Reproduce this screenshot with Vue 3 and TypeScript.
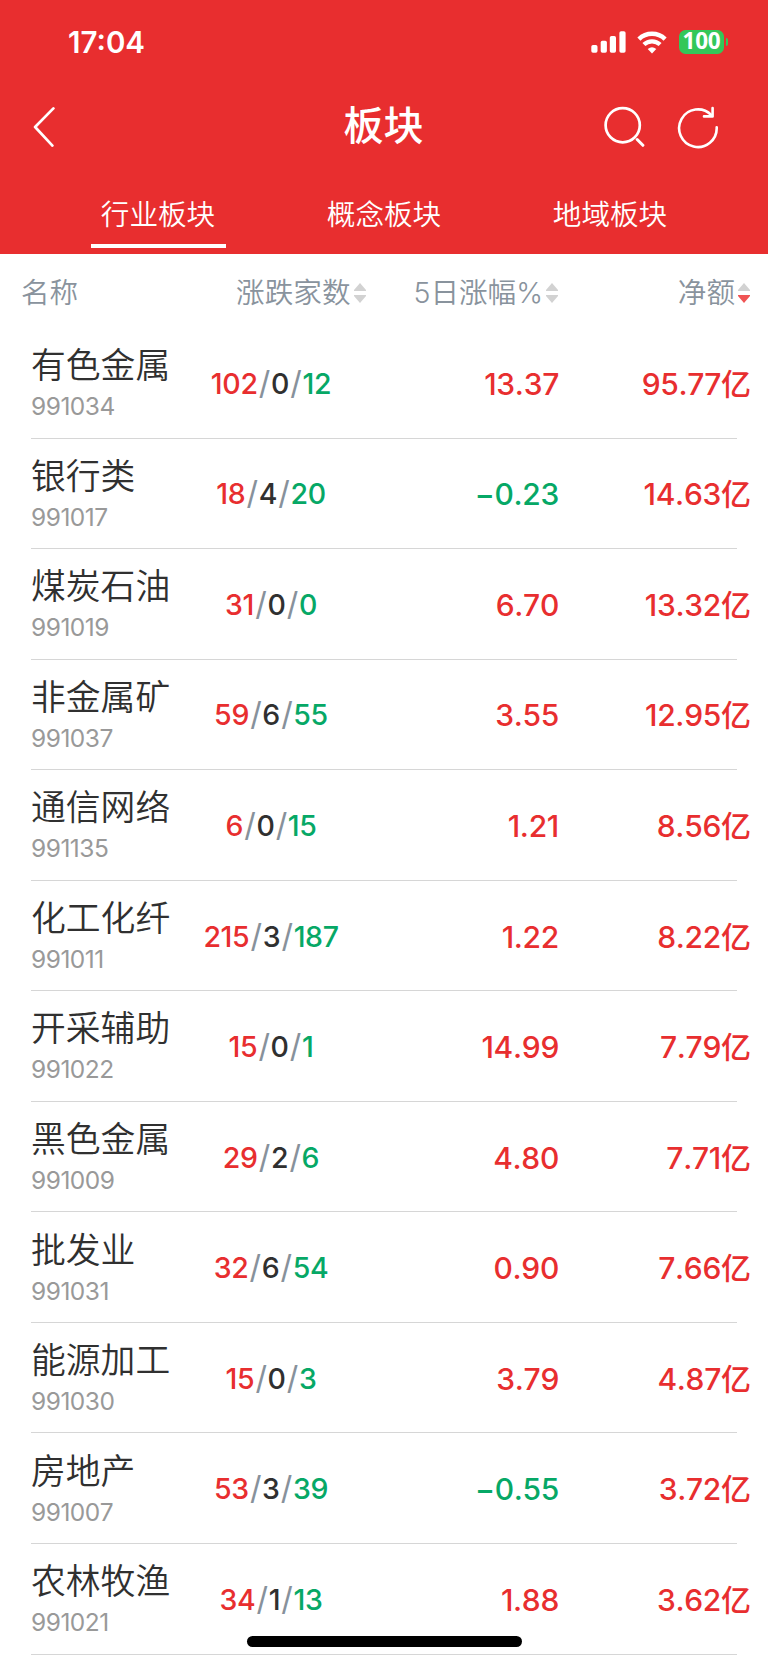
<script setup lang="ts">
interface Sector {
  name: string
  code: string
  up: number
  flat: number
  down: number
  change: string
  amount: string
}

const tabs: string[] = ['行业板块', '概念板块', '地域板块']
const activeTab = 0

const sectors: Sector[] = [
  { name: '有色金属', code: '991034', up: 102, flat: 0, down: 12, change: '13.37', amount: '95.77' },
  { name: '银行类', code: '991017', up: 18, flat: 4, down: 20, change: '−0.23', amount: '14.63' },
  { name: '煤炭石油', code: '991019', up: 31, flat: 0, down: 0, change: '6.70', amount: '13.32' },
  { name: '非金属矿', code: '991037', up: 59, flat: 6, down: 55, change: '3.55', amount: '12.95' },
  { name: '通信网络', code: '991135', up: 6, flat: 0, down: 15, change: '1.21', amount: '8.56' },
  { name: '化工化纤', code: '991011', up: 215, flat: 3, down: 187, change: '1.22', amount: '8.22' },
  { name: '开采辅助', code: '991022', up: 15, flat: 0, down: 1, change: '14.99', amount: '7.79' },
  { name: '黑色金属', code: '991009', up: 29, flat: 2, down: 6, change: '4.80', amount: '7.71' },
  { name: '批发业', code: '991031', up: 32, flat: 6, down: 54, change: '0.90', amount: '7.66' },
  { name: '能源加工', code: '991030', up: 15, flat: 0, down: 3, change: '3.79', amount: '4.87' },
  { name: '房地产', code: '991007', up: 53, flat: 3, down: 39, change: '−0.55', amount: '3.72' },
  { name: '农林牧渔', code: '991021', up: 34, flat: 1, down: 13, change: '1.88', amount: '3.62' },
]
</script>

<template>
  <div class="screen">
    <header class="top">
      <div class="status">
        <span class="time">17:04</span>
        <div class="indicators">
          <svg class="signal" width="35" height="22" viewBox="0 0 35 22" fill="#fff">
            <rect x="0.3" y="14" width="6.2" height="7.8" rx="1.7" />
            <rect x="9.7" y="9.8" width="6.2" height="12" rx="1.7" />
            <rect x="18.8" y="5" width="6.2" height="16.8" rx="1.7" />
            <rect x="28.4" y="0.2" width="6.2" height="21.6" rx="1.7" />
          </svg>
          <svg class="wifi" width="30" height="23" viewBox="0 0 30 23" fill="none" stroke="#fff">
            <path d="M1.9 8.1A19 19 0 0 1 28.1 8.1" stroke-width="4.5" />
            <path d="M6.9 13.5A11.8 11.8 0 0 1 23.1 13.5" stroke-width="4.3" />
            <path d="M15 22.4L10.7 18.1Q15 14.5 19.3 18.1Z" fill="#fff" stroke="none" />
          </svg>
          <div class="battery"><span class="level">100</span></div>
          <i class="nub"></i>
        </div>
      </div>

      <div class="nav">
        <svg class="back" width="24" height="42" viewBox="0 0 24 42" fill="none" stroke="#fff" stroke-width="2.7" stroke-linecap="round" stroke-linejoin="round">
          <path d="M22.4 2.4L4.1 21L21.4 39.6" />
        </svg>
        <h1 class="title">板块</h1>
        <div class="actions">
          <svg width="42" height="44" viewBox="0 0 42 44" fill="none" stroke="#fff" stroke-width="2.7" stroke-linecap="round">
            <circle cx="19.7" cy="20.2" r="17.1" />
            <path d="M34.2 34.5L39.9 40.3" stroke-width="3" />
          </svg>
          <svg width="42" height="44" viewBox="0 0 42 44" fill="none" stroke="#fff" stroke-width="2.6" stroke-linecap="round" stroke-linejoin="round">
            <path d="M39.7 22.4A18.8 18.8 0 1 1 34.2 9.9" />
            <path d="M35.6 3.1V11.4H27" />
          </svg>
        </div>
      </div>

      <nav class="tabs">
        <div v-for="(tab, i) in tabs" :key="tab" class="tab" :class="{ active: i === activeTab }">
          <span>{{ tab }}</span>
        </div>
      </nav>
    </header>

    <main>
      <div class="columns">
        <div class="head-name">名称</div>
        <div class="head head-count">
          <span>涨跌家数</span>
          <svg class="sort" width="12" height="20" viewBox="0 0 12 20" fill="#d2d2d2">
            <path d="M6 0L12 7V8H0V7Z" /><path d="M6 20L12 13V12H0V13Z" />
          </svg>
        </div>
        <div class="head head-change">
          <span>5日涨幅%</span>
          <svg class="sort" width="12" height="20" viewBox="0 0 12 20" fill="#d2d2d2">
            <path d="M6 0L12 7V8H0V7Z" /><path d="M6 20L12 13V12H0V13Z" />
          </svg>
        </div>
        <div class="head head-amount">
          <span>净额</span>
          <svg class="sort" width="12" height="20" viewBox="0 0 12 20" fill="#d2d2d2">
            <path d="M6 0L12 7V8H0V7Z" /><path d="M6 20L12 13V12H0V13Z" fill="#f05454" />
          </svg>
        </div>
      </div>

      <div v-for="s in sectors" :key="s.code" class="row">
        <div class="ident">
          <div class="name">{{ s.name }}</div>
          <div class="code">{{ s.code }}</div>
        </div>
        <div class="count">
          <span class="red">{{ s.up }}</span><span class="slash">/</span><span>{{ s.flat }}</span><span class="slash">/</span><span class="green">{{ s.down }}</span>
        </div>
        <div class="change" :class="s.change.startsWith('−') ? 'green' : 'red'">{{ s.change }}</div>
        <div class="amount red">{{ s.amount }}<span class="unit">亿</span></div>
      </div>
    </main>
    <div class="home-bar"></div>
  </div>
</template>

<style>
html,
body {
  margin: 0;
  background: #fff;
}
</style>

<style scoped>
.screen {
  position: relative;
  width: 768px;
  height: 1663px;
  overflow: hidden;
  background: #fff;
  color: #303030;
  font-family: Inter, "Noto Sans CJK SC", sans-serif;
}
.top {
  height: 254px;
  background: #e82e2f;
  color: #fff;
}
.status {
  display: flex;
  justify-content: space-between;
  height: 84px;
  padding: 0 40px 0 68px;
}
.time {
  font-size: 29.5px;
  font-weight: 600;
  line-height: 84px;
}
.indicators {
  display: flex;
  align-items: center;
}
.signal {
  margin-right: 11px;
}
.wifi {
  margin-right: 12px;
}
.battery {
  width: 45px;
  height: 24px;
  border-radius: 6.5px;
  background: #34c759;
  text-align: center;
}
.level {
  display: block;
  font: 700 22.5px/22px "Noto Sans", sans-serif;
  letter-spacing: -0.2px;
}
.nub {
  width: 2px;
  height: 8px;
  margin-left: 2px;
  border-radius: 0 3px 3px 0;
  background: #34c759;
}
.nav {
  display: grid;
  grid-template-columns: 1fr auto 1fr;
  align-items: center;
  height: 86px;
  padding: 0 49px 0 31px;
}
.back {
  display: block;
}
.title {
  margin: 0 0 3px 17px;
  font-size: 40px;
  font-weight: 500;
  line-height: 60px;
}
.actions {
  display: flex;
  justify-content: flex-end;
  gap: 32px;
}
.tabs {
  display: grid;
  grid-template-columns: repeat(3, 226px);
  justify-content: center;
  height: 84px;
}
.tab {
  display: flex;
  flex-direction: column;
  align-items: center;
  font-size: 28.6px;
  font-weight: 350;
  line-height: 90px;
  height: 84px;
}
.tab.active::after {
  content: "";
  width: 135px;
  height: 4px;
  margin-top: -16px;
  background: #fff;
}
.columns {
  display: grid;
  grid-template-columns: 200px 165.5px 192.5px 192px;
  align-items: center;
  box-sizing: border-box;
  height: 74px;
  padding-top: 3px;
  color: #89939d;
  font-size: 28.6px;
  font-weight: 350;
  line-height: 40px;
}
.head-name {
  padding-left: 21px;
}
.head {
  display: flex;
  align-items: center;
  justify-content: flex-end;
  white-space: nowrap;
}
.sort {
  margin: 1px 0 0 3px;
}
.row {
  display: grid;
  grid-template-columns: 157px 166px 205px 192px;
  align-items: center;
  box-sizing: border-box;
  width: 706px;
  height: 110.55px;
  margin-left: 31px;
  padding-top: 2px;
  border-bottom: 1px solid #d6d6d6;
  font-size: 30px;
  font-weight: 500;
  line-height: 40px;
  font-kerning: none;
}
.ident {
  padding-bottom: 1.2px;
}
.name {
  height: 44px;
  font-size: 34.8px;
  font-weight: 350;
  line-height: 44px;
}
.code {
  height: 34px;
  margin-top: 2px;
  color: #999;
  font-size: 24.5px;
  font-weight: 400;
  line-height: 34px;
  letter-spacing: -0.5px;
}
.count {
  font-size: 28.5px;
  letter-spacing: -0.35px;
  text-align: center;
}
.slash {
  margin: 0 1px 0 1.2px;
  color: #87919b;
  font-size: 32px;
  font-weight: 400;
  line-height: 30px;
}
.change,
.amount {
  letter-spacing: -0.3px;
  text-align: right;
  white-space: nowrap;
}
.unit {
  display: inline-block;
  height: 40px;
  letter-spacing: 0;
}
.red {
  color: #e82e2f;
}
.green {
  color: #06a866;
}
.home-bar {
  position: absolute;
  left: 247px;
  top: 1636px;
  width: 275px;
  height: 11px;
  border-radius: 6px;
  background: #000;
}
</style>
